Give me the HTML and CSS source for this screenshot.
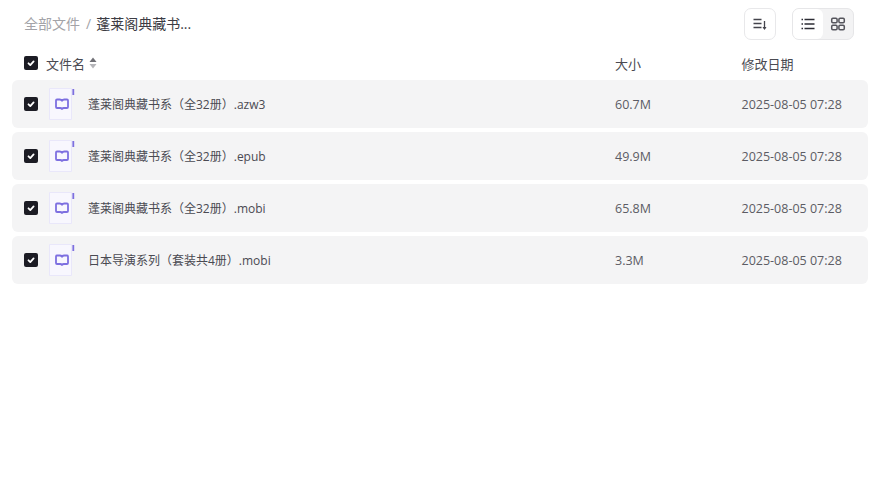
FILE: index.html
```html
<!DOCTYPE html>
<html lang="zh">
<head>
<meta charset="utf-8">
<title>全部文件</title>
<link rel="stylesheet" href="styles.css">
</head>
<body>
<svg class="defs" width="0" height="0" aria-hidden="true">
  <symbol id="check" viewBox="0 0 14 14"><path d="M4.500 7.300l1.800 1.800 3.300-3.700" fill="none" stroke="#fff" stroke-width="1.800" stroke-linecap="round" stroke-linejoin="round"/></symbol>
  <symbol id="book" viewBox="0 0 26 32">
    <path d="M.5.5H22.5V31.500H.5Z" fill="#f8f7fe" stroke="#e9e7fa"/>
    <rect x="23.400" y="1" width="1.800" height="6" fill="#7d6fe0"/>
    <path d="M8 11.500h2.800c1 0 1.700.4 2.200 1.200.5-.8 1.200-1.200 2.200-1.200H18a1 1 0 0 1 1 1v6.500a1 1 0 0 1-1 1h-3.200c-.8 0-1.300.3-1.800 1-.5-.7-1-1-1.800-1H8a1 1 0 0 1-1-1v-6.500a1 1 0 0 1 1-1Z" fill="none" stroke="#7d6fe0" stroke-width="1.800" stroke-linejoin="round"/>
  </symbol>
</svg>
<main class="page">
  <header class="topbar">
    <nav class="crumbs"><span class="crumb-root">全部文件</span><span class="crumb-sep">/</span><span class="crumb-current">蓬莱阁典藏书...</span></nav>
    <div class="tools">
      <button class="tool-btn" aria-label="排序">
        <svg width="16" height="16" viewBox="0 0 16 16"><path d="M1.500 3.500h8M1.500 7.500h8M1.500 11.500h8" fill="none" stroke="#44444c" stroke-width="1.300"/><path d="M12.500 5v8" stroke="#44444c" stroke-width="1.300"/><path d="M10.500 11h4L12.500 14Z" fill="#44444c"/></svg>
      </button>
      <div class="switch">
        <button class="switch-btn active" aria-label="列表">
          <svg width="16" height="16" viewBox="0 0 16 16"><path d="M4.500 3.500h10M4.500 8h10M4.500 12.500h10" stroke="#2c2c34" stroke-width="1.500"/><path d="M1.500 3.500h1.500M1.500 8h1.500M1.500 12.500h1.500" stroke="#2c2c34" stroke-width="1.500"/></svg>
        </button>
        <button class="switch-btn" aria-label="网格">
          <svg width="16" height="16" viewBox="0 0 16 16" fill="none" stroke="#55555c" stroke-width="1.500"><rect x="1.700" y="2.200" width="5.400" height="4.600" rx="1.200"/><rect x="8.900" y="2.200" width="5.400" height="4.600" rx="1.200"/><rect x="1.700" y="9.200" width="5.400" height="4.600" rx="1.200"/><rect x="8.900" y="9.200" width="5.400" height="4.600" rx="1.200"/></svg>
        </button>
      </div>
    </div>
  </header>
  <div class="table-head">
    <div class="col-name">
      <svg class="box"><use href="#check"/></svg>
      <span>文件名</span>
      <svg class="sort" width="8" height="12" viewBox="0 0 8 12"><path d="M4 .5 7.500 5H.5Z" fill="#6f6f75"/><path d="M4 11.500.5 7h7Z" fill="#b5b5b9"/></svg>
    </div>
    <div class="col-size">大小</div>
    <div class="col-date">修改日期</div>
  </div>
  <ul class="rows">
    <li class="row">
      <div class="col-name"><svg class="box"><use href="#check"/></svg><svg class="file-icon"><use href="#book"/></svg><span class="fname">蓬莱阁典藏书系（全32册）.azw3</span></div>
      <div class="col-size">60.7M</div><div class="col-date">2025-08-05 07:28</div>
    </li>
    <li class="row">
      <div class="col-name"><svg class="box"><use href="#check"/></svg><svg class="file-icon"><use href="#book"/></svg><span class="fname">蓬莱阁典藏书系（全32册）.epub</span></div>
      <div class="col-size">49.9M</div><div class="col-date">2025-08-05 07:28</div>
    </li>
    <li class="row">
      <div class="col-name"><svg class="box"><use href="#check"/></svg><svg class="file-icon"><use href="#book"/></svg><span class="fname">蓬莱阁典藏书系（全32册）.mobi</span></div>
      <div class="col-size">65.8M</div><div class="col-date">2025-08-05 07:28</div>
    </li>
    <li class="row">
      <div class="col-name"><svg class="box"><use href="#check"/></svg><svg class="file-icon"><use href="#book"/></svg><span class="fname">日本导演系列（套装共4册）.mobi</span></div>
      <div class="col-size">3.3M</div><div class="col-date">2025-08-05 07:28</div>
    </li>
  </ul>
</main>
</body>
</html>
```

FILE: styles.css
```css
* { box-sizing: border-box; }
html, body { margin: 0; background: #fff; }
body {
  font-family: "Open Sans", "Noto Sans CJK SC", sans-serif;
  font-size: 13px;
  color: #3c3c44;
  overflow: hidden;
}
.defs { display: block; height: 0; }
.page { padding: 8px 10px 0 12px; }
.topbar {
  display: flex;
  align-items: center;
  justify-content: space-between;
  height: 32px;
  padding: 0 4px 0 12px;
}
.crumbs { display: flex; align-items: center; font-size: 14px; line-height: 32px; }
.crumb-root { color: #a3a3a8; }
.crumb-sep { color: #a3a3a8; margin: 0 5px 0 6px; }
.crumb-current { color: #3c3c44; }
.tools { display: flex; align-items: center; gap: 16px; margin-right: 10px; }
.tool-btn {
  width: 32px;
  height: 32px;
  padding: 0;
  display: flex;
  align-items: center;
  justify-content: center;
  background: #fff;
  border: 1px solid #e8e8ea;
  border-radius: 7px;
}
.switch {
  display: flex;
  width: 62px;
  height: 32px;
  background: #f3f3f4;
  border: 1px solid #e6e6e8;
  border-radius: 7px;
}
.switch-btn {
  flex: 1;
  padding: 0;
  display: flex;
  align-items: center;
  justify-content: center;
  background: transparent;
  border: 0;
  border-radius: 6px;
}
.switch-btn.active { background: #fff; }
.table-head, .row { display: grid; grid-template-columns: 603px 126.500px 1fr; align-items: center; }
.table-head { height: 40px; padding-top: 6px; font-size: 13px; color: #4a4a52; }
.col-name { display: flex; align-items: center; padding-left: 12px; min-width: 0; }
.box { width: 14px; height: 14px; background: #1c1c24; border-radius: 2px; flex: none; }
.table-head .box + span { margin-left: 8px; }
.sort { margin-left: 4px; }
.rows { list-style: none; margin: 0; padding: 0; display: flex; flex-direction: column; gap: 4px; }
.row { height: 48px; background: #f4f4f5; border-radius: 6px; }
.file-icon { width: 26px; height: 32px; flex: none; margin-left: 11px; }
.fname { margin-left: 13px; font-size: 12px; white-space: nowrap; color: #4a4a52; }
.row .col-size, .row .col-date { font-size: 12.500px; color: #5c5c64; }
```
